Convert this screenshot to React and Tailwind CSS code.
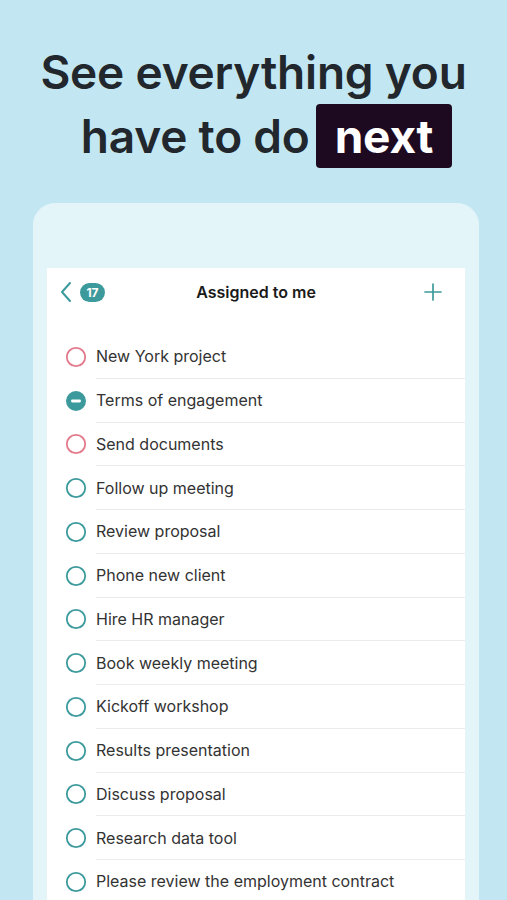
import React from 'react';

const tasks = [
    { title: 'New York project', state: 'overdue' },
    { title: 'Terms of engagement', state: 'partial' },
    { title: 'Send documents', state: 'overdue' },
    { title: 'Follow up meeting', state: 'open' },
    { title: 'Review proposal', state: 'open' },
    { title: 'Phone new client', state: 'open' },
    { title: 'Hire HR manager', state: 'open' },
    { title: 'Book weekly meeting', state: 'open' },
    { title: 'Kickoff workshop', state: 'open' },
    { title: 'Results presentation', state: 'open' },
    { title: 'Discuss proposal', state: 'open' },
    { title: 'Research data tool', state: 'open' },
    { title: 'Please review the employment contract', state: 'open' },
];

const StatusCircle = ({ state }) => {
    if (state === 'partial') {
        return (
            <svg width="22" height="22" viewBox="0 0 22 22">
                <circle cx="11" cy="11" r="10" fill="#3d9a9c" />
                <rect x="6" y="9.6" width="10" height="2.8" rx="1.4" fill="#fff" />
            </svg>
        );
    }
    const color = state === 'overdue' ? '#e3798b' : '#3d9a9c';
    return (
        <svg width="22" height="22" viewBox="0 0 22 22">
            <circle cx="11" cy="11" r="9.2" fill="none" stroke={color} strokeWidth="1.8" />
        </svg>
    );
};

const App = () => {
    return (
        <div className="min-h-[900px] h-[900px] overflow-hidden bg-[#c3e7f2] font-['Inter',sans-serif]">
            {/* Headline */}
            <h1 className="pt-[40px] text-[46px] leading-[64px] font-semibold tracking-[-0.2px] text-[#22272d]">
                <div className="text-center">See everything you</div>
                <div className="flex justify-center pl-[26px]">
                    <span>have to do</span>
                    <span className="ml-[6px] h-[64px] px-[19px] rounded-[4px] bg-[#1e0a20] text-white font-bold">next</span>
                </div>
            </h1>

            {/* Phone card */}
            <div className="ml-[33px] mr-[28px] mt-[35px] h-[700px] rounded-t-[22px] bg-[#e4f5f9] px-[14px] pt-[65px]">
                <div className="h-full bg-white">
                    <div className="h-[48px] px-[12px] flex items-center justify-between relative">
                        <div className="flex items-center gap-[7px]">
                            <svg width="14" height="22" viewBox="0 0 14 22" fill="none">
                                <path d="M11 2 L3 11 L11 20" stroke="#3d9a9c" strokeWidth="2" strokeLinecap="round" strokeLinejoin="round" />
                            </svg>
                            <span className="h-[19px] min-w-[25px] px-[6px] rounded-full bg-[#3d9a9c] text-white text-[12px] font-bold leading-[19px] text-center">17</span>
                        </div>
                        <div className="absolute left-0 right-0 text-center text-[16px] font-semibold text-[#1a1a1a] pointer-events-none">Assigned to me</div>
                        <svg width="20" height="20" viewBox="0 0 20 20" fill="none" className="mr-[10px]">
                            <path d="M10 2 V18 M2 10 H18" stroke="#3d9a9c" strokeWidth="1.7" strokeLinecap="round" />
                        </svg>
                    </div>

                    <ul className="pt-[19px]">
                        {tasks.map((task) => (
                            <li key={task.title} className="h-[43.75px] flex items-center">
                                <div className="w-[49px] flex justify-end pr-[9px]">
                                    <StatusCircle state={task.state} />
                                </div>
                                <div className="flex-1 h-full flex items-center border-b border-[#ececec] text-[16px] text-[#333333]">
                                    {task.title}
                                </div>
                            </li>
                        ))}
                    </ul>
                </div>
            </div>
        </div>
    );
};

export default App;
